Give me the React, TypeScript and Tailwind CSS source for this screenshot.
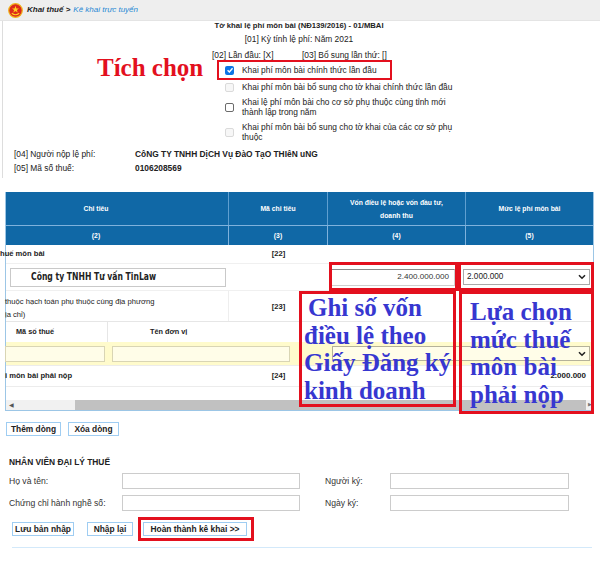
import React from "react";

function Box({ kind }: { kind: "on" | "off" | "dis" }) {
  if (kind === "on")
    return (
      <span className="w-[9px] h-[9px] rounded-[2px] bg-[#0a74e6] flex items-center justify-center shrink-0">
        <svg viewBox="0 0 10 10" className="w-[8px] h-[8px]">
          <path d="M2 5.2 L4.2 7.4 L8.2 2.8" stroke="white" strokeWidth="1.7" fill="none" />
        </svg>
      </span>
    );
  if (kind === "off")
    return <span className="w-[9px] h-[9px] rounded-[2px] border border-[#6b6b6b] bg-white shrink-0" />;
  return <span className="w-[9px] h-[9px] rounded-[2px] border border-[#dadada] bg-[#f7f7f7] shrink-0" />;
}

function Chevron() {
  return (
    <svg width="8" height="6" viewBox="0 0 8 6">
      <path d="M1 1.2 L4 4.2 L7 1.2" stroke="#222" strokeWidth="1.6" fill="none" />
    </svg>
  );
}

function Emblem() {
  return (
    <svg width="15" height="15" viewBox="0 0 15 15" className="shrink-0">
      <circle cx="7.5" cy="7.5" r="6.8" fill="#dd2a1b" stroke="#f0b51c" strokeWidth="1.2" />
      <polygon
        points="7.5,2.8 8.4,5.4 11,5.4 8.9,7 9.7,9.6 7.5,8 5.3,9.6 6.1,7 4,5.4 6.6,5.4"
        fill="#ffd21f"
      />
      <path d="M3.8 10.3 Q7.5 13.2 11.2 10.3" stroke="#ffd21f" strokeWidth="1.2" fill="none" />
    </svg>
  );
}

const cols = "grid grid-cols-[223px_99px_138px_127px]";

export default function App() {
  return (
    <div className="relative w-[600px] h-[565px] overflow-hidden bg-white font-['Liberation_Sans',Arial,sans-serif] text-[#222]">
      {/* ===== Top screenshot ===== */}
      <div className="h-[178px] flex flex-col">
        <div className="h-[21px] shrink-0 bg-[#eeeeee] border-b border-[#e4e4e4] flex items-center pl-[8px]">
          <Emblem />
          <span className="ml-[4px] text-[8px] italic font-bold text-[#222]">Khai thuế &gt;</span>
          <span className="ml-[3px] text-[8px] italic text-[#1e88d4]">Kê khai trực tuyến</span>
        </div>
        <div className="flex-1 flex ml-[2px] border-l border-[#dddddd]">
          <div className="flex-1 flex flex-col text-[8.4px] leading-[10px]">
            <div className="text-center font-bold text-[7.7px] leading-[9px] pr-[5px]">
              Tờ khai lệ phí môn bài (NĐ139/2016) - 01/MBAI
            </div>
            <div className="mt-[4px] text-center pr-[5px]">[01] Kỳ tính lệ phí: Năm 2021</div>
            <div className="mt-[6px] ml-[209px] flex">
              <span className="w-[90px]">[02] Lần đầu: [X]</span>
              <span>[03] Bổ sung lần thứ: []</span>
            </div>
            <div className="ml-[214px] w-[175px] h-[20px] border-2 border-[#e3101e] flex items-center pl-[6px]">
              <Box kind="on" />
              <span className="ml-[8px]">Khai phí môn bài chính thức lần đầu</span>
            </div>
            <div className="mt-[2px] ml-[222px] flex items-center">
              <Box kind="dis" />
              <span className="ml-[8px]">Khai phí môn bài bổ sung cho tờ khai chính thức lần đầu</span>
            </div>
            <div className="mt-[5px] ml-[222px] flex items-center">
              <Box kind="off" />
              <span className="ml-[8px]">
                Khai lệ phí môn bài cho cơ sở phụ thuộc cùng tỉnh mới
                <br />
                thành lập trong năm
              </span>
            </div>
            <div className="mt-[5px] ml-[222px] flex items-center">
              <Box kind="dis" />
              <span className="ml-[8px]">
                Khai phí môn bài bổ sung cho tờ khai của các cơ sở phụ
                <br />
                thuộc
              </span>
            </div>
            <div className="mt-[7px] ml-[11px] flex">
              <span className="w-[121px]">[04] Người nộp lệ phí:</span>
              <span className="font-bold">CôNG TY TNHH DịCH Vụ ĐàO TạO THIêN uNG</span>
            </div>
            <div className="mt-[4px] ml-[11px] flex">
              <span className="w-[121px]">[05] Mã số thuế:</span>
              <span className="font-bold">0106208569</span>
            </div>
          </div>
        </div>
      </div>

      {/* ===== Table screenshot ===== */}
      <div className="mt-[14px] ml-[5px] w-[589px] border-l border-r border-b border-[#9cc6e6] text-[7.6px]">
        {/* header */}
        <div className={`${cols} bg-[#1068a6] text-white font-bold text-[6.8px] leading-[13px]`}>
          <div className="h-[33px] border-r border-[#5f9fd0] flex items-center justify-center pr-[42px]">Chỉ tiêu</div>
          <div className="h-[33px] border-r border-[#5f9fd0] flex items-center justify-center">Mã chỉ tiêu</div>
          <div className="h-[33px] border-r border-[#5f9fd0] flex items-center justify-center text-center">
            Vốn điều lệ hoặc vốn đầu tư,
            <br />
            doanh thu
          </div>
          <div className="h-[33px] flex items-center justify-center">Mức lệ phí môn bài</div>
          <div className="h-[20px] border-t border-r border-[#7fb2dc] flex items-center justify-center pr-[42px]">(2)</div>
          <div className="h-[20px] border-t border-r border-[#7fb2dc] flex items-center justify-center">(3)</div>
          <div className="h-[20px] border-t border-r border-[#7fb2dc] flex items-center justify-center">(4)</div>
          <div className="h-[20px] border-t border-[#7fb2dc] flex items-center justify-center">(5)</div>
        </div>

        {/* row 22 */}
        <div className={`${cols} h-[19px] border-b border-[#f0f0f0] items-center`}>
          <div className="-ml-[6px] font-bold">huế môn bài</div>
          <div className="text-center font-bold">[22]</div>
          <div />
          <div />
        </div>

        {/* input row */}
        <div className={`${cols} h-[26px] items-center`}>
          <div className="pl-[4px] pr-[3px]">
            <div className="h-[19px] border border-[#c9c9c9] bg-white flex items-center pl-[20px] overflow-hidden">
              <span className="inline-block origin-left scale-x-[0.73] whitespace-nowrap font-['DejaVu_Sans',sans-serif] font-bold text-[10.5px] text-[#222]">
                Công ty TNHH Tư vấn TinLaw
              </span>
            </div>
          </div>
          <div />
          <div className="pl-[3px]">
            <div className="w-[124px] h-[17px] border border-[#cfcfcf] border-t-[#8a8a8a] bg-white flex items-center justify-end pr-[5px] text-[8.1px] text-[#333]">
              2.400.000.000
            </div>
          </div>
          <div className="-ml-[3px]">
            <div className="w-[127px] h-[16px] border border-[#a9a9a9] bg-white flex items-center justify-between pl-[3px] pr-[3px] text-[8.2px] text-[#222]">
              <span>2.000.000</span>
              <Chevron />
            </div>
          </div>
        </div>

        {/* row 23 */}
        <div className={`${cols} h-[31px] border-t border-[#f0f0f0]`}>
          <div className="border-r border-[#eeeeee] pt-[4px] -ml-[1px] leading-[13px]">
            thuộc hạch toán phụ thuộc cùng địa phương
            <br />
            ịa chỉ)
          </div>
          <div className="flex items-center justify-center font-bold pt-[1px]">[23]</div>
          <div />
          <div />
        </div>

        {/* sub header */}
        <div className="h-[21px] border-t border-[#e6e6e6] flex font-bold text-[7.3px]">
          <div className="w-[102px] border-r border-[#e6e6e6] flex items-center pl-[10px]">Mã số thuế</div>
          <div className="flex items-center pl-[42px]">Tên đơn vị</div>
        </div>

        {/* yellow row */}
        <div className="h-[23px] bg-[#fffbcc] flex items-center">
          <div className="-ml-[1px] w-[100px] h-[16px] border border-[#d9d5b4] bg-[#fffde8]" />
          <div className="ml-[7px] w-[178px] h-[16px] border border-[#d9d5b4] bg-[#fffde8]" />
          <div className="ml-[42px] w-[258px] h-[15px] border border-[#b5b29a] bg-[#fffde8] flex items-center justify-end pr-[3px]">
            <Chevron />
          </div>
        </div>

        {/* row 24 */}
        <div className={`${cols} h-[22px] border-t border-b border-[#ececec] items-center`}>
          <div className="-ml-[1px] font-bold">i môn bài phải nộp</div>
          <div className="text-center font-bold">[24]</div>
          <div />
          <div className="text-right pr-[7px] font-bold text-[8px]">2.000.000</div>
        </div>

        <div className="h-[13px]" />

        {/* scrollbar */}
        <div className="h-[10px] flex">
          <div className="w-[69px] bg-[#f1f1f1] flex items-center pl-[3px] text-[6px] text-[#555]">◀</div>
          <div className="flex-1 bg-[#c1c1c1]" />
          <div className="w-[7px] bg-[#f1f1f1] flex items-center justify-center text-[5px] text-[#777]">▶</div>
        </div>
      </div>

      {/* ===== Bottom ===== */}
      <div className="mt-[11px] ml-[6px] flex gap-[7px] text-[8.4px] font-bold">
        <div className="w-[55px] h-[14px] border border-[#9fcdf2] flex items-center justify-center">Thêm dòng</div>
        <div className="w-[51px] h-[14px] border border-[#9fcdf2] flex items-center justify-center">Xóa dòng</div>
      </div>

      <div className="mt-[21px] ml-[9px] font-bold text-[8.4px] leading-[10px]">NHÂN VIÊN ĐẠI LÝ THUẾ</div>

      <div className="mt-[6px] ml-[9px] flex items-center text-[8.6px] text-[#333]">
        <span className="w-[113px]">Họ và tên:</span>
        <div className="w-[178px] h-[16px] border border-[#cccccc]" />
        <span className="ml-[25px] w-[65px]">Người ký:</span>
        <div className="w-[179px] h-[16px] border border-[#cccccc]" />
      </div>
      <div className="mt-[6px] ml-[9px] flex items-center text-[8.6px] text-[#333]">
        <span className="w-[113px]">Chứng chỉ hành nghề số:</span>
        <div className="w-[178px] h-[16px] border border-[#cccccc]" />
        <span className="ml-[25px] w-[65px]">Ngày ký:</span>
        <div className="w-[179px] h-[16px] border border-[#cccccc]" />
      </div>

      <div className="mt-[6px] ml-[12px] flex items-center text-[8.4px] font-bold">
        <div className="w-[62px] h-[14px] border border-[#9fcdf2] flex items-center justify-center">Lưu bản nhập</div>
        <div className="ml-[13px] w-[46px] h-[14px] border border-[#9fcdf2] flex items-center justify-center">Nhập lại</div>
        <div className="ml-[5px] w-[116px] h-[24px] border-[3px] border-[#e3101e] flex items-center pl-[2px]">
          <div className="w-[104px] h-[14px] border border-[#9fcdf2] flex items-center justify-center">
            Hoàn thành kê khai &gt;&gt;
          </div>
        </div>
      </div>

      <div className="mt-[6px] ml-[12px] w-[580px] h-[1px] bg-[#d3e9fa]" />

      {/* ===== Annotations ===== */}
      <div className="absolute left-[97px] top-[54px] font-['Liberation_Serif',serif] font-bold text-[25px] leading-[27px] text-[#e3101e]">
        Tích chọn
      </div>
      <div className="absolute left-[329px] top-[262px] w-[129px] h-[29px] border-[3px] border-[#e3101e]" />
      <div className="absolute left-[458px] top-[262px] w-[136px] h-[29px] border-[3px] border-[#e3101e]" />
      <div className="absolute left-[299px] top-[291px] w-[157px] h-[116px] border-[3px] border-[#e3101e] pl-[2px] font-['Liberation_Serif',serif] font-bold text-[25px] leading-[27.5px] text-[#3737d0]">
        <div className="pl-[4px]">Ghi số vốn</div>
        <div>điều lệ theo</div>
        <div className="whitespace-nowrap">Giấy Đăng ký</div>
        <div>kinh doanh</div>
      </div>
      <div className="absolute left-[459px] top-[291px] w-[135px] h-[123px] border-[3px] border-[#e3101e] pl-[8px] pt-[4px] font-['Liberation_Serif',serif] font-bold text-[25px] leading-[27.5px] text-[#3737d0]">
        <div>Lựa chọn</div>
        <div className="whitespace-nowrap">mức thuế</div>
        <div>môn bài</div>
        <div>phải nộp</div>
      </div>
    </div>
  );
}
